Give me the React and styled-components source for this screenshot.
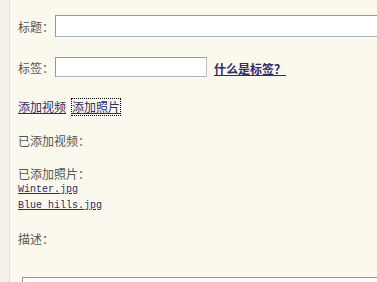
import styled, { createGlobalStyle } from "styled-components";

const GlobalStyle = createGlobalStyle`
  html, body {
    margin: 0;
    padding: 0;
    background: #f3f1e7;
    overflow: hidden;
  }
`;

export default function App() {
  return (
    <>
      <GlobalStyle />
      <Page>
        <Panel>
          <FieldRow $top={15}>
            <Label>标题：</Label>
            <TextInput $width="340px" $height={22} />
          </FieldRow>

          <FieldRow $top={20}>
            <Label>标签：</Label>
            <TextInput $width="152px" $height={20} />
            <HelpLink href="#">什么是标签？</HelpLink>
          </FieldRow>

          <Line $top={22}>
            <Link href="#">添加视频</Link>
            <Link href="#" $focused>添加照片</Link>
          </Line>

          <Line $top={18}>已添加视频：</Line>

          <Line $top={17}>已添加照片：</Line>
          <FileLink href="#">Winter.jpg</FileLink>
          <FileLink href="#">Blue hills.jpg</FileLink>

          <Line $top={17}>描述：</Line>

          <TextArea />
        </Panel>
      </Page>
    </>
  );
}

const Page = styled.div`
  width: 377px;
  height: 282px;
  display: flex;
  padding-left: 9px;
  box-sizing: border-box;
`;

const Panel = styled.div`
  flex: 1;
  background: #fbf9ee;
  border-left: 1px solid #e4e1d6;
  padding: 0 0 0 8px;
  font-family: "Noto Sans CJK SC", "Liberation Sans", sans-serif;
  font-size: 12px;
  color: #555555;
  display: flex;
  flex-direction: column;
  align-items: flex-start;
  overflow: hidden;
`;

const FieldRow = styled.div`
  display: flex;
  align-items: center;
  margin-top: ${(p) => p.$top}px;
  white-space: nowrap;
`;

const Label = styled.span`
  width: 37px;
  line-height: 16px;
  margin-top: 2px;
`;

const TextInput = styled.div`
  width: ${(p) => p.$width};
  height: ${(p) => p.$height}px;
  box-sizing: border-box;
  flex-shrink: 0;
  background: #ffffff;
  border: 1px solid #8a9aa8;
  border-right-color: #b8c2cc;
  border-bottom-color: #a9b4bf;
`;

const HelpLink = styled.a`
  margin-left: 7px;
  margin-top: 3px;
  color: #2c2c6c;
  font-weight: bold;
  line-height: 16px;
  text-decoration: underline;
`;

const Line = styled.div`
  display: flex;
  gap: 6px;
  margin-top: ${(p) => p.$top}px;
  line-height: 16px;
  white-space: nowrap;
`;

const Link = styled.a`
  color: #2c2c6c;
  text-decoration: underline;
  outline: ${(p) => (p.$focused ? "1px dotted #000" : "none")};
`;

const FileLink = styled.a`
  display: block;
  font-family: "Liberation Mono", monospace;
  font-size: 10px;
  line-height: 16px;
  color: #2c2c6c;
  text-decoration: underline;
`;

const TextArea = styled.div`
  margin-top: 30px;
  margin-left: 4px;
  width: 380px;
  height: 40px;
  flex-shrink: 0;
  box-sizing: border-box;
  background: #ffffff;
  border: 1px solid #8a9aa8;
`;
